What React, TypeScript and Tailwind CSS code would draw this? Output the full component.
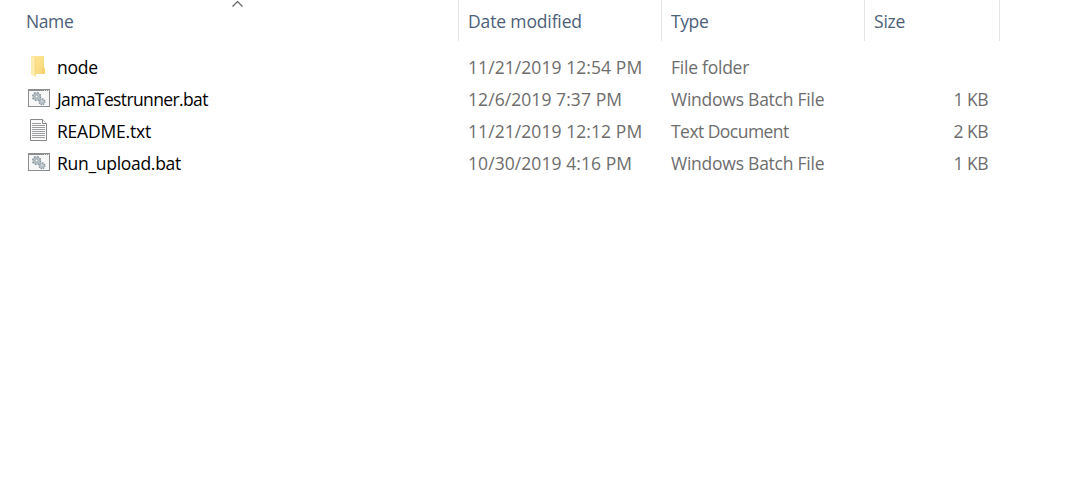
import React from "react";

function FolderIcon() {
  return (
    <svg width="22" height="24" viewBox="0 0 22 24" className="block">
      <defs>
        <linearGradient id="folder-front" x1="0" y1="0" x2="1" y2="1">
          <stop offset="0" stopColor="#ffe69a" />
          <stop offset="1" stopColor="#f8d775" />
        </linearGradient>
      </defs>
      <path d="M3 2H16V13.5L17 14.5V20H3Z" fill="url(#folder-front)" />
      <path d="M14 20V14.2L15 13.4H16L17 14.4V20Z" fill="#f5d26e" />
      <path d="M3 2L7.5 4.5V23L3 20.3Z" fill="#ffedb0" />
      <path d="M7.3 4.4V22.6" stroke="#f0cf6c" strokeWidth="0.7" />
    </svg>
  );
}

function BatchIcon() {
  return (
    <svg width="22" height="24" viewBox="0 0 22 24" className="block">
      <rect x="0.5" y="3.5" width="21" height="17" fill="#f8f8f8" stroke="#8b8d8f" />
      <path d="M0 4H22" stroke="#8b8d8f" strokeWidth="2" />
      <path d="M16 4.5h1M18 4.5h1M20 4.5h1" stroke="#d4d5d6" />
      <circle cx="8.6" cy="10.6" r="3" fill="none" stroke="#b3bfc6" strokeWidth="2" />
      <circle cx="8.6" cy="10.6" r="4" fill="none" stroke="#87939a" strokeWidth="1.4" strokeDasharray="1.6 1.54" />
      <circle cx="8.6" cy="10.6" r="1.6" fill="#fff" stroke="#7f8b92" strokeWidth="0.9" />
      <circle cx="14" cy="15.7" r="2.2" fill="none" stroke="#b3bfc6" strokeWidth="1.6" />
      <circle cx="14" cy="15.7" r="3" fill="none" stroke="#87939a" strokeWidth="1.2" strokeDasharray="1.2 1.156" />
      <circle cx="14" cy="15.7" r="1.1" fill="#fff" stroke="#8b979e" strokeWidth="0.7" />
    </svg>
  );
}

function TextIcon() {
  return (
    <svg width="22" height="24" viewBox="0 0 22 24" className="block">
      <path d="M2.5 1.5H14.5L18.5 5.5V22.5H2.5Z" fill="#fafafa" stroke="#858789" />
      <path d="M14.5 1.5V5.5H18.5" fill="#fff" stroke="#858789" />
      <path
        d="M4 5.5H13M4 7.5H17M4 9.5H17M4 11.5H17M4 13.5H17M4 15.5H17M4 17.5H17M4 19.5H17"
        stroke="#9c9ea0"
      />
    </svg>
  );
}

type Row = {
  icon: React.ReactNode;
  name: string;
  nameClass: string;
  date: string;
  type: string;
  typeClass: string;
  size: string;
};

const rows: Row[] = [
  { icon: <FolderIcon />, name: "node", nameClass: "tracking-[-0.2px]", date: "11/21/2019 12:54 PM", type: "File folder", typeClass: "tracking-[-0.24px]", size: "" },
  { icon: <BatchIcon />, name: "JamaTestrunner.bat", nameClass: "tracking-[-0.62px]", date: "12/6/2019 7:37 PM", type: "Windows Batch File", typeClass: "tracking-[-0.24px]", size: "1 KB" },
  { icon: <TextIcon />, name: "README.txt", nameClass: "tracking-[-0.2px]", date: "11/21/2019 12:12 PM", type: "Text Document", typeClass: "tracking-[-0.54px]", size: "2 KB" },
  { icon: <BatchIcon />, name: "Run_upload.bat", nameClass: "tracking-[-0.29px]", date: "10/30/2019 4:16 PM", type: "Windows Batch File", typeClass: "tracking-[-0.24px]", size: "1 KB" },
];

export default function App() {
  return (
    <main className="h-[504px] w-full overflow-hidden bg-white font-['Segoe_UI','Open_Sans',sans-serif] text-[17.5px] leading-8 whitespace-nowrap text-[#6d6d6d]">
      <header className="grid h-[41px] grid-cols-[459px_203px_203px_135px] text-[#4c607a]">
        <div className="relative border-r border-[#e5e5e5] pt-[5px] pl-[26px] tracking-[-0.4px]">
          Name
          <svg width="12" height="7" viewBox="0 0 12 7" className="absolute top-0 left-[232px]">
            <path d="M0.5 6.5L5.5 1.5L10.5 6.5" fill="none" stroke="#606060" strokeWidth="1.2" />
          </svg>
        </div>
        <div className="border-r border-[#e5e5e5] pt-[5px] pl-[9px] tracking-[-0.14px]">Date modified</div>
        <div className="border-r border-[#e5e5e5] pt-[5px] pl-[9px] tracking-[-0.4px]">Type</div>
        <div className="border-r border-[#e5e5e5] pt-[5px] pl-[9px] tracking-[-0.2px]">Size</div>
      </header>
      <section className="pt-[10px]">
        {rows.map((row) => (
          <div key={row.name} className="grid h-8 grid-cols-[459px_203px_203px_135px]">
            <div className="flex pl-7 text-black">
              <span className="mt-[3px] mr-[7px] w-[22px]">{row.icon}</span>
              <span className={row.nameClass}>{row.name}</span>
            </div>
            <div className="pl-[9px] tracking-[0.07px]">{row.date}</div>
            <div className="pl-[9px]"><span className={row.typeClass}>{row.type}</span></div>
            <div className="pr-3 text-right tracking-[-0.5px]">{row.size}</div>
          </div>
        ))}
      </section>
    </main>
  );
}
